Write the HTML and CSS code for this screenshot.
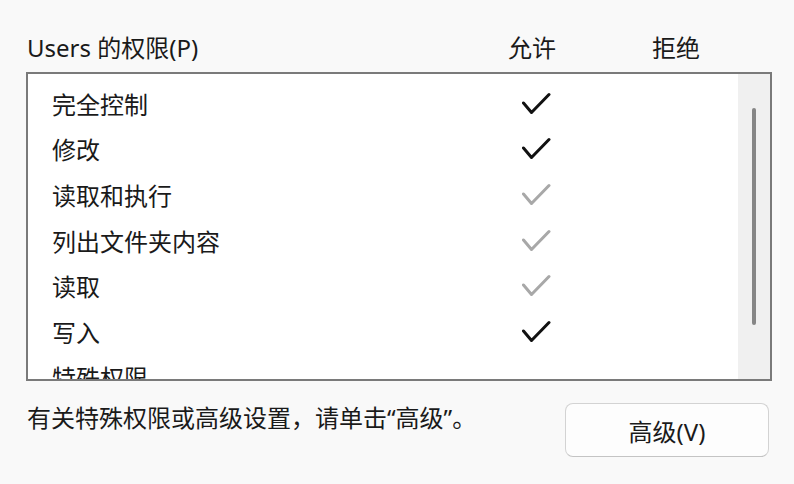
FILE: index.html
```html
<!DOCTYPE html>
<html lang="zh-CN">
<head>
  <meta charset="UTF-8" />
  <meta name="viewport" content="width=device-width, initial-scale=1.0" />
  <title>Users 的权限</title>
  <link rel="stylesheet" href="styles.css">
</head>
<body>
  <div class="panel">
    <div class="cabecera">
      <span class="titulo">Users 的权限(P)</span>
      <span>允许</span>
      <span>拒绝</span>
    </div>

    <div class="lista">
      <div class="filas">
        <div class="fila"><span>完全控制</span><svg class="check" viewBox="0 0 29 24"><path d="M1.5 11 L9.5 20.5 L27 2.5" /></svg></div>
        <div class="fila"><span>修改</span><svg class="check" viewBox="0 0 29 24"><path d="M1.5 11 L9.5 20.5 L27 2.5" /></svg></div>
        <div class="fila"><span>读取和执行</span><svg class="check gris" viewBox="0 0 29 24"><path d="M1.5 11 L9.5 20.5 L27 2.5" /></svg></div>
        <div class="fila"><span>列出文件夹内容</span><svg class="check gris" viewBox="0 0 29 24"><path d="M1.5 11 L9.5 20.5 L27 2.5" /></svg></div>
        <div class="fila"><span>读取</span><svg class="check gris" viewBox="0 0 29 24"><path d="M1.5 11 L9.5 20.5 L27 2.5" /></svg></div>
        <div class="fila"><span>写入</span><svg class="check" viewBox="0 0 29 24"><path d="M1.5 11 L9.5 20.5 L27 2.5" /></svg></div>
        <div class="fila"><span>特殊权限</span></div>
      </div>
      <div class="scroll"><div class="thumb"></div></div>
    </div>

    <div class="pie">
      <p>有关特殊权限或高级设置，请单击“高级”。</p>
      <button>高级(V)</button>
    </div>
  </div>
</body>
</html>
```

FILE: styles.css
```css
body {
  margin: 0;
  padding: 33px 22px 0 26px;
  background: #f9f9f9;
  color: #1a1a1a;
  font-family: 'Noto Sans', 'Noto Sans CJK SC', sans-serif;
  font-size: 24px;
}
.cabecera {
  display: grid;
  grid-template-columns: 481px 144px 1fr;
  line-height: 30px;
  height: 30px;
  margin-bottom: 9px;
  padding-left: 1px;
}
.lista {
  display: flex;
  height: 305px;
  border: 2px solid #7a7a7a;
  background: white;
  overflow: hidden;
}
.filas {
  flex: 1;
  padding-top: 8px;
}
.fila {
  display: grid;
  grid-template-columns: 470px 29px;
  align-items: center;
  height: 45.6px;
  line-height: 30px;
  padding-left: 24px;
}
.check {
  width: 29px;
  height: 24px;
  margin-bottom: 2px;
  fill: none;
  stroke: #111;
  stroke-width: 3;
  stroke-linecap: round;
  stroke-linejoin: round;
}
.check.gris {
  stroke: #a8a8a8;
}
.scroll {
  width: 32px;
  background: #f0f0f0;
  padding-top: 34px;
}
.thumb {
  width: 4px;
  height: 217px;
  margin-left: 14px;
  background: #868686;
  border-radius: 2px;
}
.pie {
  display: flex;
  justify-content: space-between;
  align-items: flex-start;
  margin-top: 22px;
  padding-left: 1px;
}
.pie p {
  margin: 0;
  line-height: 29px;
}
button {
  width: 204px;
  height: 54px;
  margin-right: 3px;
  background: #fdfdfd;
  border: 1px solid #d3d3d3;
  border-bottom-color: #c4c4c4;
  border-radius: 8px;
  font-family: inherit;
  font-size: 24px;
  color: #1a1a1a;
  padding: 0;
}
```
